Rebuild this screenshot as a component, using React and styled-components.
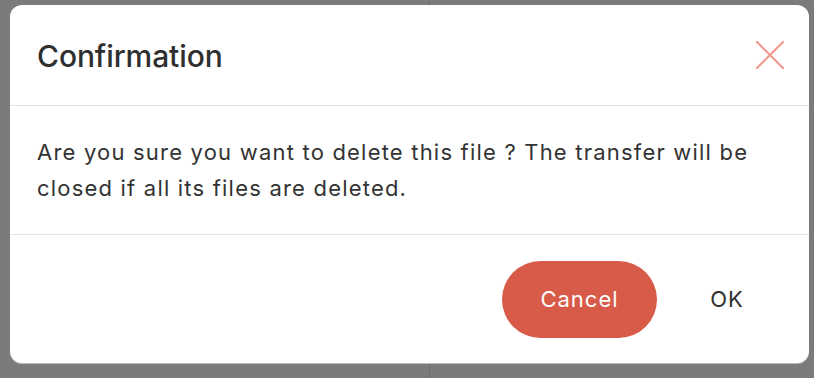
import React from 'react';
import styled, { createGlobalStyle } from 'styled-components';

const GlobalStyle = createGlobalStyle`
  html, body {
    margin: 0;
    padding: 0;
    background: #7b7b7b;
  }
  body {
    font-family: Inter, 'Noto Sans', sans-serif;
    -webkit-font-smoothing: antialiased;
  }
`;

const Backdrop = styled.div`
  position: relative;
  width: 814px;
  height: 378px;
  overflow: hidden;
  background: linear-gradient(
    to right,
    #7b7b7b 0,
    #7b7b7b 429px,
    #6c6c6c 429px,
    #6c6c6c 430px,
    #7b7b7b 430px
  );
  padding: 5px 5px 0 10px;
  box-sizing: border-box;
`;

const Dialog = styled.div`
  display: flex;
  flex-direction: column;
  width: 799px;
  height: 358px;
  background: #fff;
  border-radius: 12px;
  box-shadow: 0 1px 0 #bdbdbd;
  overflow: hidden;
`;

const Header = styled.div`
  display: flex;
  align-items: center;
  justify-content: space-between;
  height: 101px;
  padding: 2px 24px 0 27px;
  border-bottom: 1px solid #e4e4e4;
  box-sizing: border-box;
`;

const Title = styled.h2`
  margin: 0;
  font-size: 30px;
  font-weight: 500;
  color: #2f2f2f;
  letter-spacing: -0.1px;
`;

const CloseButton = styled.button`
  display: flex;
  align-items: center;
  justify-content: center;
  width: 30px;
  height: 30px;
  margin-top: -2px;
  padding: 0;
  border: none;
  background: none;
  cursor: pointer;
`;

const Body = styled.div`
  height: 129px;
  padding: 0 27px;
  display: flex;
  align-items: center;
  border-bottom: 1px solid #e4e4e4;
  box-sizing: border-box;
`;

const Message = styled.p`
  margin: 0;
  font-size: 22px;
  line-height: 36px;
  letter-spacing: 1.2px;
  color: #333;
`;

const Footer = styled.div`
  flex: 1;
  display: flex;
  align-items: center;
  justify-content: flex-end;
  gap: 15px;
  padding: 0 27px 0 0;
`;

const Button = styled.button`
  height: 77px;
  padding: 0;
  width: ${p => (p.primary ? '155px' : '110px')};
  border: none;
  border-radius: 39px;
  font-family: Inter, 'Noto Sans', sans-serif;
  font-size: 22px;
  letter-spacing: 1px;
  color: ${p => (p.primary ? '#fff' : '#2f2f2f')};
  background: ${p => (p.primary ? '#d85a48' : 'transparent')};
  cursor: pointer;
`;

export default function App() {
  return (
    <>
      <GlobalStyle />
      <Backdrop>
        <Dialog>
          <Header>
            <Title>Confirmation</Title>
            <CloseButton aria-label="Close">
              <svg width="28" height="28" viewBox="0 0 28 28">
                <path d="M1 1L27 27M27 1L1 27" stroke="#f29a90" strokeWidth="2.2" strokeLinecap="round" />
              </svg>
            </CloseButton>
          </Header>
          <Body>
            <Message>
              Are you sure you want to delete this file ? The transfer will be closed if all its files are deleted.
            </Message>
          </Body>
          <Footer>
            <Button primary>Cancel</Button>
            <Button>OK</Button>
          </Footer>
        </Dialog>
      </Backdrop>
    </>
  );
}
